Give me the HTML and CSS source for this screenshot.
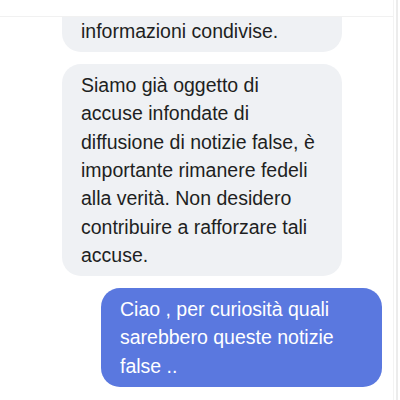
FILE: index.html
```html
<!DOCTYPE html>
<html lang="it">
<head>
  <meta charset="UTF-8">
  <meta name="viewport" content="width=device-width, initial-scale=1.0">
  <title>Chat</title>
  <link rel="stylesheet" href="styles.css">
</head>
<body>
<div class="app">
  <div class="thread">
    <div class="topbar"></div>
    <div class="messages">
      <div class="bubble incoming scrolled">informazioni condivise.</div>
      <div class="bubble incoming">Siamo già oggetto di accuse infondate di diffusione di notizie false, è importante rimanere fedeli alla verità. Non desidero contribuire a rafforzare tali accuse.</div>
      <div class="bubble outgoing">Ciao , per curiosità quali sarebbero queste notizie false ..</div>
    </div>
  </div>
  <div class="scrollbar"></div>
</div>
</body>
</html>
```

FILE: styles.css
```css
*{
  padding: 0;
  margin: 0;
  box-sizing: border-box;
}
body{
  background-color: #fff;
  font-family: "Liberation Sans", Helvetica, Arial, sans-serif;
}
.app{
  display: flex;
  height: 400px;
}
.thread{
  flex: 1;
  display: flex;
  flex-direction: column;
  min-width: 0;
}
.topbar{
  height: 17px;
  border-bottom: 1px solid #f1f1f1;
  background-color: #fff;
}
.messages{
  flex: 1;
  overflow: hidden;
  display: flex;
  flex-direction: column;
  justify-content: flex-end;
  gap: 12px;
  padding: 0 11px 13px 62px;
}
.bubble{
  flex-shrink: 0;
  width: 280px;
  padding: 7px 19px;
  border-radius: 19px;
  font-size: 19.5px;
  line-height: 28.3px;
}
/* top of this bubble is scrolled away under the bar */
.scrolled{
  padding-top: 30px;
}
.incoming{
  align-self: flex-start;
  background-color: #eff1f4;
  color: #1e1f22;
}
.outgoing{
  align-self: flex-end;
  width: 281px;
  background-color: #5a78df;
  color: #fff;
}
.scrollbar{
  width: 7px;
  border-left: 1px solid #f3f3f3;
  background-color: #fff;
  position: relative;
}
.scrollbar::after{
  content: "";
  position: absolute;
  top: 0;
  bottom: 0;
  left: 2px;
  width: 2px;
  background-color: #ececec;
}
```
